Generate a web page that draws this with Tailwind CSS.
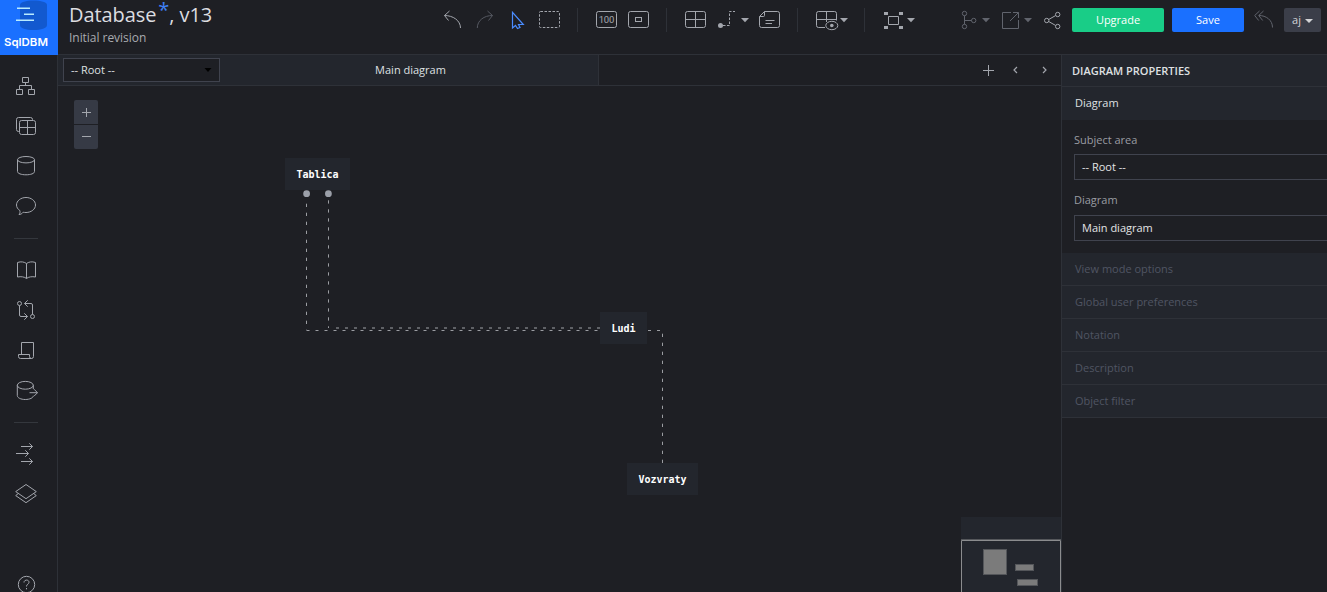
<!DOCTYPE html>
<html lang="en">
<head>
<meta charset="utf-8">
<title>SqlDBM</title>
<script src="https://cdn.jsdelivr.net/npm/@tailwindcss/browser@4"></script>
</head>
<body class="w-[1327px] h-[592px] overflow-hidden bg-[#1e1f24] text-[#d2d3d6] text-[11px] leading-4 font-['Open_Sans',sans-serif] flex">

<aside class="w-[58px] h-[592px] shrink-0 flex flex-col overflow-hidden">
  <svg class="w-[58px] h-[55px] shrink-0" viewBox="0 0 58 55">
    <rect width="58" height="55" fill="#1a70ff"/>
    <path d="M20 5C20 2 26 .5 33.5 .5S47 2 47 5V25C47 28.500 41 30 33.500 30S20 28.500 20 25Z" fill="#1259cf"/>
    <path d="M17 8.300H30M24 14.300H34M16 20.300H34" stroke="#b9ecff" stroke-width="1.500"/>
    <text x="4" y="45.800" textLength="44" lengthAdjust="spacingAndGlyphs" fill="#fff" font-family="Inter, sans-serif" font-weight="600" font-size="11">SqlDBM</text>
  </svg>
  <nav class="flex-1 border-r border-[#2e3138] pt-[11px] pr-[5px] flex flex-col items-center text-[#a3a6ad]">
    <div class="h-10 shrink-0 flex items-center"><svg class="size-6" viewBox="0 0 24 24" fill="none" stroke="currentColor"><path d="M8.500 3.500h6v5h-6zM2.500 15.500h6v5h-6zM14.500 15.500h6v5h-6zM5.500 15.500v-4h12v4M11.500 8.500v3"/></svg></div>
    <div class="h-10 shrink-0 flex items-center"><svg class="size-6" viewBox="0 0 24 24" fill="none" stroke="currentColor"><rect x="5.500" y="6.500" width="16" height="14" rx="2"/><path d="M13.500 6.500v14M5.500 13.500h16M5.500 17.500h-1a2 2 0 0 1-2-2v-10a2 2 0 0 1 2-2h12a2 2 0 0 1 2 2v1"/></svg></div>
    <div class="h-10 shrink-0 flex items-center"><svg class="size-6" viewBox="0 0 24 24" fill="none" stroke="currentColor"><ellipse cx="12" cy="5.700" rx="8.500" ry="3.200"/><path d="M3.500 5.700V17.500C3.500 19.500 7.300 20.800 12 20.800S20.500 19.500 20.500 17.500V5.700"/></svg></div>
    <div class="h-10 shrink-0 flex items-center"><svg class="size-6" viewBox="0 0 24 24" fill="none" stroke="currentColor" stroke-linejoin="round"><path d="M5.800 16.500C3.800 15.200 2.500 13.200 2.500 11 2.500 6.800 6.800 3.500 12 3.500S21.500 6.800 21.500 11 17.200 18.500 12 18.500C11 18.500 10 18.400 9.200 18.200 8 19.800 6.500 20.500 5 20.500 6 19.500 6.300 18 5.800 16.500Z"/></svg></div>
    <div class="h-6 shrink-0 flex items-center"><div class="w-6 h-px bg-[#34373d]"></div></div>
    <div class="h-10 shrink-0 flex items-center"><svg class="size-6" viewBox="0 0 24 24" fill="none" stroke="currentColor"><path d="M12.500 5.500V20.500C10.500 18.800 7 18.300 3.500 19V4.500C7 3.200 10.500 4 12.500 5.500C14.500 4 18 3.200 21.500 4.500V19C18 18.300 14.500 18.800 12.500 20.500"/></svg></div>
    <div class="h-10 shrink-0 flex items-center"><svg class="size-6" viewBox="0 0 24 24" fill="none" stroke="currentColor"><circle cx="5.500" cy="5.500" r="2"/><circle cx="18.500" cy="18.500" r="2"/><path d="M5.500 7.500V17q0 1.500 1.500 1.500H13.500M10.300 15.300l3.200 3.200-3.200 3.200M18.500 16.500V7q0-1.500-1.500-1.500H10.500M13.700 2.300L10.500 5.500l3.200 3.200"/></svg></div>
    <div class="h-10 shrink-0 flex items-center"><svg class="size-6" viewBox="0 0 24 24" fill="none" stroke="currentColor"><path d="M7.500 16.500V4.500H19.500V18.500q0 2-2 2H6.500q-2 0-2-2V16.500H15.500V18.500q0 2 2 2"/></svg></div>
    <div class="h-10 shrink-0 flex items-center"><svg class="size-6" viewBox="0 0 24 24" fill="none" stroke="currentColor"><ellipse cx="11.300" cy="7.300" rx="8" ry="3.900"/><path d="M3.300 7.300V17.500C3.300 19.800 6.800 21.500 11.300 21.500S19.300 19.800 19.300 17.800M19.300 7.300V11M15.500 14.700H23.500M20 11.200l3.500 3.500-3.500 3.500"/></svg></div>
    <div class="h-6 shrink-0 flex items-center"><div class="w-6 h-px bg-[#34373d]"></div></div>
    <div class="h-10 shrink-0 flex items-center"><svg class="size-6" viewBox="0 0 24 24" fill="none" stroke="currentColor"><path d="M7 4.500H18.500M15.300 1.300l3.200 3.200-3.200 3.200M2 11.500H14.500M11.300 8.300l3.200 3.200-3.200 3.200M7 19.500H18.500M15.300 16.300l3.200 3.200-3.200 3.200"/></svg></div>
    <div class="h-10 shrink-0 flex items-center"><svg class="size-6" viewBox="0 0 24 24" fill="none" stroke="currentColor"><path d="M12 2.500L22.300 9.600 12 16.700 1.700 9.600ZM4.300 11.500L1.700 13.600 12 20.700 22.300 13.600 19.700 11.500"/></svg></div>
    <div class="mt-auto -mb-3 h-10 shrink-0 flex items-center"><svg class="size-6" viewBox="0 0 24 24" fill="none" stroke="currentColor"><circle cx="12.500" cy="12.500" r="8.200"/><path d="M10 10.500C10 7.300 15 7.300 15 10.300 15 12.300 12.500 12 12.500 14.500M12.500 16v1.300"/></svg></div>
  </nav>
</aside>

<div class="flex-1 min-w-0 flex flex-col">
  <header class="h-[55px] shrink-0 border-b border-[#2e3138] flex items-start text-[#a3a6ad]">
    <div class="w-[385px] pl-[11px] pt-px shrink-0">
      <div class="h-[29px] leading-[27px] text-[20px] text-[#dcdde0] tracking-[-0.08px] whitespace-nowrap flex"><span>Database</span><span class="text-[#3f80f5] ml-[2px] -mt-[5px]">*</span><span>, v13</span></div>
      <div class="text-[12px] leading-[16px] tracking-[-0.04px] text-[#a9abb0]">Initial revision</div>
    </div>
    <div class="pt-2 flex items-start h-10">
      <svg class="w-5 h-6" viewBox="0 0 20 24" fill="none" stroke="currentColor"><path d="M1.500 7.500C10 7.500 17.500 12.500 17.500 20M6.500 3L1.500 7.500l4 5"/></svg>
      <svg class="ml-[13px] w-5 h-6 text-[#555861]" viewBox="0 0 20 24" fill="none" stroke="currentColor"><path d="M16.500 7.500C8 7.500 1.300 12.500 1.300 20M11.500 3l5 4.500-4 5"/></svg>
      <svg class="ml-[15px] w-[14px] h-6 text-[#4a8cff]" viewBox="0 0 14 24" fill="none" stroke="currentColor" stroke-width="1.200"><path d="M1.500 4.300V20L4.500 17.500 6.500 20.500 9 19.500 7.500 16.500H12.300Z"/></svg>
      <svg class="ml-[14px] w-[22px] h-6" viewBox="0 0 22 24" fill="none" stroke="currentColor"><rect x=".5" y="3.500" width="20" height="16" rx="1" stroke-dasharray="2.500 1.500"/></svg>
      <div class="ml-4 w-px h-6 bg-[#2e3138]"></div>
      <svg class="ml-[18px] w-[22px] h-6" viewBox="0 0 22 24" fill="none" stroke="currentColor"><rect x=".5" y="3.500" width="20" height="16" rx="2"/><text x="10.500" y="15" text-anchor="middle" fill="currentColor" stroke="none" font-family="Roboto, sans-serif" font-size="9.500" textLength="15.500">100</text></svg>
      <svg class="ml-[10px] w-[22px] h-6" viewBox="0 0 22 24" fill="none" stroke="currentColor"><rect x=".5" y="3.500" width="20" height="16" rx="2"/><rect x="7.500" y="9.500" width="6" height="4"/></svg>
      <div class="ml-4 w-px h-6 bg-[#2e3138]"></div>
      <svg class="ml-[18px] w-[22px] h-6" viewBox="0 0 22 24" fill="none" stroke="currentColor"><rect x=".5" y="3.500" width="20" height="16" rx="2"/><path d="M10.500 3.500v16M.5 11.500h20"/></svg>
      <svg class="ml-[11px] w-[18px] h-6" viewBox="0 0 18 24" fill="none" stroke="currentColor"><circle cx="2.500" cy="17.500" r="2.500" fill="currentColor" stroke="none"/><path d="M5 17.500H11.500V3.500H17" stroke-dasharray="2.500 1.500"/></svg>
      <svg class="ml-[5px] w-2 h-6" viewBox="0 0 8 24"><path d="M0 10h8L4 14.200z" fill="currentColor"/></svg>
      <svg class="ml-[10px] w-[22px] h-6" viewBox="0 0 22 24" fill="none" stroke="currentColor"><path d="M5.500 3.500H18.500q2 0 2 2V17.500q0 2-2 2H2.500q-2 0-2-2V8.500ZM5.500 3.500V7.500q0 1-1 1H.5M6.500 12.500H15.500M6.500 15.500H13"/></svg>
      <div class="ml-4 w-px h-6 bg-[#2e3138]"></div>
      <svg class="ml-[18px] w-6 h-6" viewBox="0 0 24 24" fill="none" stroke="currentColor"><path d="M9 19.500H2.500q-2 0-2-2V5.500q0-2 2-2H18.500q2 0 2 2V12.500M10.500 3.500V14M.5 11.500H20.500"/><ellipse cx="15.800" cy="17.500" rx="6" ry="4.200"/><circle cx="15.800" cy="17.500" r="1.800" fill="currentColor" stroke="none"/></svg>
      <svg class="w-2 h-6" viewBox="0 0 8 24"><path d="M0 10h8L4 14.200z" fill="currentColor"/></svg>
      <div class="ml-4 w-px h-6 bg-[#2e3138]"></div>
      <svg class="ml-[19px] w-5 h-6" viewBox="0 0 20 24" fill="none" stroke="currentColor"><path d="M4.500 8.500h10v8h-10z"/><path d="M0 4h4v3H0zM15 4h4v3h-4zM0 18h4v3H0zM15 18h4v3h-4z" fill="currentColor" stroke="none"/></svg>
      <svg class="ml-[3px] w-2 h-6" viewBox="0 0 8 24"><path d="M0 10h8L4 14.200z" fill="currentColor"/></svg>
      <svg class="ml-[46px] w-4 h-6 text-[#61646d]" viewBox="0 0 16 24" fill="none" stroke="currentColor"><circle cx="3.500" cy="5.500" r="2.200"/><circle cx="3.500" cy="18.500" r="2.200"/><circle cx="12.700" cy="12.500" r="2.200"/><path d="M3.500 7.700V16.300M3.500 12.500H10.500"/></svg>
      <svg class="ml-[5px] w-2 h-6 text-[#61646d]" viewBox="0 0 8 24"><path d="M0 10h8L4 14.200z" fill="currentColor"/></svg>
      <svg class="ml-3 w-[18px] h-6 text-[#61646d]" viewBox="0 0 18 24" fill="none" stroke="currentColor"><path d="M9 4.500H.5V20.500H16.500V12M8 13L16.500 4.500M11 4.500H16.500V10"/></svg>
      <svg class="ml-1 w-2 h-6 text-[#61646d]" viewBox="0 0 8 24"><path d="M0 10h8L4 14.200z" fill="currentColor"/></svg>
      <svg class="ml-3 w-[18px] h-6" viewBox="0 0 18 24" fill="none" stroke="currentColor"><circle cx="2.700" cy="12.500" r="2.200"/><circle cx="13.700" cy="6.500" r="2.200"/><circle cx="13.700" cy="18.500" r="2.200"/><path d="M4.700 11.500L11.700 7.500M4.700 13.500L11.700 17.500"/></svg>
      <button class="ml-[10px] w-[92px] h-6 rounded-[2px] bg-[#19cd87] text-white text-[11px] font-medium">Upgrade</button>
      <button class="ml-2 w-[72px] h-6 rounded-[2px] bg-[#1a70ff] text-white text-[11px] font-medium">Save</button>
      <svg class="ml-[10px] w-5 h-6 text-[#61646d]" viewBox="0 0 20 24" fill="none" stroke="currentColor"><path d="M5 7.500C12 7.500 18.500 12 18.500 19.500M5.500 3L.7 7.500l4 5M9.500 3L4.700 7.500l4 5"/></svg>
      <button class="ml-[10px] w-[37px] h-6 rounded-[2px] bg-[#3b3e49] text-[#d2d3d6] text-[11px] flex items-center justify-center gap-1"><span>aj</span><svg class="w-2 h-6" viewBox="0 0 8 24"><path d="M0 11h8L4 15z" fill="currentColor"/></svg></button>
    </div>
  </header>

  <div class="flex-1 min-h-0 flex">
    <main class="w-[1003px] flex flex-col shrink-0">
      <div class="h-[31px] shrink-0 border-b border-[#2e3138] flex">
        <div class="w-[541px] bg-[#23262d] border-r border-[#2e3138] flex pl-[5px] pt-[3px] text-[#dfe0e2]">
          <div class="w-[157px] h-6 border border-[#40434e] bg-[#1e1f24] flex items-center justify-between pl-[7px] pr-[7px]"><span>-- Root --</span><svg class="w-2 h-2" viewBox="0 0 8 8"><path d="M.5 2h7L4 6z" fill="#000"/></svg></div>
          <div class="flex-1 text-center pt-[4px] pl-[3px]">Main diagram</div>
        </div>
        <div class="flex-1 flex justify-end items-center text-[#a3a6ad] pr-3">
          <svg class="w-3 h-3" viewBox="0 0 12 12" fill="none" stroke="currentColor"><path d="M6.500 1v11M1 6.500h11"/></svg>
          <svg class="ml-[18px] w-2 h-3" viewBox="0 0 8 12" fill="none" stroke="currentColor" stroke-width="1.200"><path d="M5 3L2 6l3 3"/></svg>
          <svg class="ml-[21px] w-2 h-3" viewBox="0 0 8 12" fill="none" stroke="currentColor" stroke-width="1.200"><path d="M2 3l3 3-3 3"/></svg>
        </div>
      </div>
      <!-- Diagram canvas -->
      <div class="relative flex-1 overflow-hidden font-['DejaVu_Sans_Mono',monospace] font-bold text-[10px] text-white">
        <svg class="absolute inset-0 w-[1003px] h-[506px]" viewBox="58 86 1003 506" fill="none" stroke="#9b9da2">
          <path d="M306.500 203.700V330" stroke-dasharray="3.300 5.700"/>
          <path d="M328.500 200.300V328" stroke-dasharray="3.300 5.700"/>
          <path d="M306.500 330.500H600" stroke-dasharray="3 6"/>
          <path d="M336 328H600" stroke="#5f6166" stroke-width="2" stroke-dasharray="3 6"/>
          <path d="M648 330.500H662" stroke-dasharray="3 6"/>
          <path d="M662.500 333.700V463" stroke-dasharray="3.300 5.700"/>
          <g fill="#9b9fa8" stroke="none"><circle cx="306.600" cy="193.700" r="3.400"/><circle cx="328.400" cy="193.700" r="3.400"/></g>
        </svg>
        <div class="absolute left-4 top-[14px] w-6 flex flex-col gap-px">
          <div class="h-6 rounded-t-[2px] bg-[#363a45] flex items-center justify-center"><svg class="size-[10px]" viewBox="0 0 10 10" stroke="#a3a6ad"><path d="M5.500 1v9M1 5.500h9"/></svg></div>
          <div class="h-6 rounded-b-[2px] bg-[#363a45] flex items-center justify-center"><svg class="size-[10px]" viewBox="0 0 10 10" stroke="#a3a6ad"><path d="M1 4.500h9"/></svg></div>
        </div>
        <div class="absolute left-[227px] top-[72px] w-[65px] h-8 pt-[2px] bg-[#23262d] flex items-center justify-center">Tablica</div>
        <div class="absolute left-[542px] top-[226px] w-[47px] h-8 pt-[2px] bg-[#23262d] flex items-center justify-center">Ludi</div>
        <div class="absolute left-[569px] top-[377px] w-[71px] h-8 pt-[2px] bg-[#23262d] flex items-center justify-center">Vozvraty</div>
        <svg class="absolute left-[903px] top-[431px] w-[100px] h-[75px]" viewBox="0 0 100 75">
          <rect width="100" height="75" fill="#23262d"/>
          <path d="M0 22.500H100" stroke="#55575b"/>
          <path d="M.5 75V23.500H99.500V75" fill="none" stroke="#8b8c8e"/>
          <g fill="#7b7b7b" stroke="#54565a"><rect x="22.500" y="32.500" width="23" height="25"/><rect x="54.500" y="47.500" width="18" height="6"/><rect x="56.500" y="62.500" width="20" height="6"/></g>
        </svg>
      </div>
    </main>

    <section class="flex-1 border-l border-[#2e3138]">
      <div class="h-8 bg-[#23262d] border-b border-[#2e3138] pl-[10px] leading-[32px] font-semibold text-[#dfe0e2]">DIAGRAM PROPERTIES</div>
      <div class="h-[33px] bg-[#23262d] pl-[13px] leading-[31px] text-[#dfe0e2]">Diagram</div>
      <div class="pl-3 pt-3 h-[133px] text-[#9a9ca2]">
        <div class="h-[22px]">Subject area</div>
        <div class="h-[26px] border border-r-0 border-[#40434e] pl-[7px] leading-[24px] text-[#e3e4e6] font-medium">-- Root --</div>
        <div class="pt-3 h-[35px]">Diagram</div>
        <div class="h-[26px] border border-r-0 border-[#40434e] pl-[7px] leading-[24px] text-[#e3e4e6] font-medium">Main diagram</div>
      </div>
      <div class="text-[#505563] leading-[32px]">
        <div class="h-[33px] bg-[#23262d] border-b border-[#2e3138] pl-[13px]">View mode options</div>
        <div class="h-[33px] bg-[#23262d] border-b border-[#2e3138] pl-[13px]">Global user preferences</div>
        <div class="h-[33px] bg-[#23262d] border-b border-[#2e3138] pl-[13px]">Notation</div>
        <div class="h-[33px] bg-[#23262d] border-b border-[#2e3138] pl-[13px]">Description</div>
        <div class="h-[33px] bg-[#23262d] border-b border-[#2e3138] pl-[13px]">Object filter</div>
      </div>
    </section>
  </div>
</div>
</body>
</html>
